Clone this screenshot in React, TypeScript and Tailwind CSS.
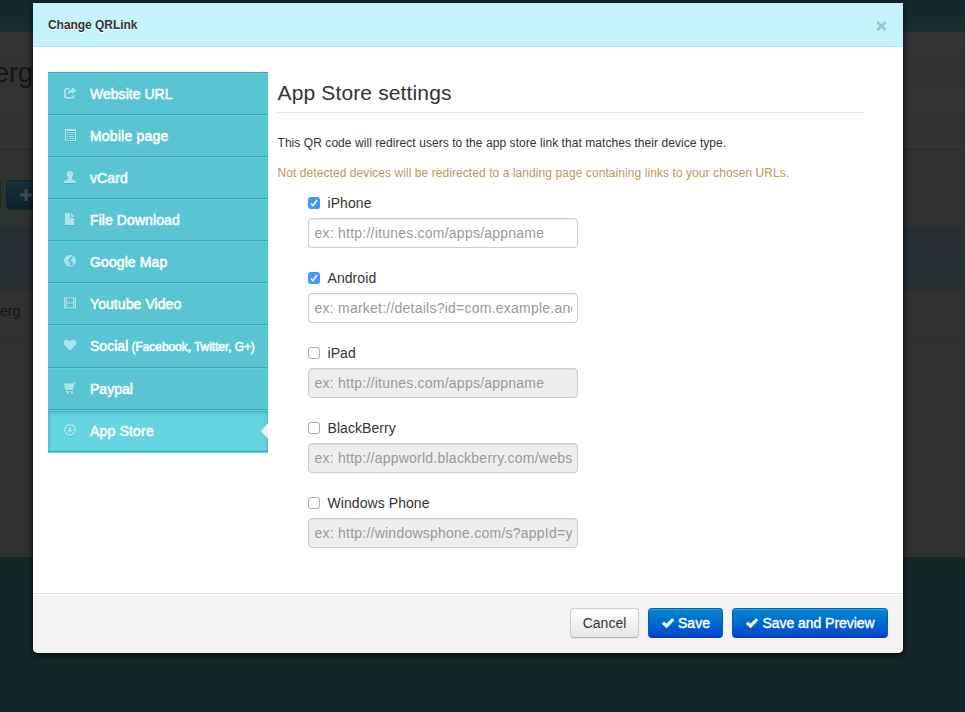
import type { ReactNode } from "react";

const glyphs: Record<string, ReactNode> = {
  share: (
    <>
      <path d="M6.500 2.900H4Q1.900 2.900 1.900 5V10Q1.900 12.100 4 12.100H8.700Q10.800 12.100 10.800 10V9" fill="none" stroke="currentColor" strokeWidth="1.900" />
      <path d="M9 1L13.500 4.800L9 8.600V6.400Q6.600 6.200 4.600 9Q4.600 3.600 9 3.200Z" />
    </>
  ),
  list: (
    <path shapeRendering="crispEdges" fillRule="evenodd" d="M2 1H13V13H2ZM3 3V12H12V3ZM4 4H5V5H4ZM6 4H11V5H6ZM4 6H5V7H4ZM6 6H11V7H6ZM4 8H5V9H4ZM6 8H11V9H6ZM4 10H5V11H4ZM6 10H11V11H6Z" />
  ),
  user: (
    <path d="M7 1C9.300 1 10.500 2.300 10.300 4.200C10.200 5.800 9.500 6.500 9 7.300V9.200L12 10.500Q13 11 13 13H1Q1 11 2 10.500L5 9.200V7.300C4.500 6.500 3.800 5.800 3.700 4.200C3.500 2.300 4.700 1 7 1Z" />
  ),
  file: <path d="M2 1H7V6H11V13H2ZM8 1L11 4V5H8Z" />,
  globe: (
    <>
      <circle cx="7" cy="7" r="5.400" fill="none" stroke="currentColor" strokeWidth="1.200" />
      <path d="M1.500 4.500L4 2L7 1.200L8.500 3L6.500 4L6.500 5.500L4.500 6.500L7 8.500L6 12.500L3.500 11L3 8L1.300 7.500ZM9 1.500L12.500 4.500V8L10.500 11L9.500 8L8 7L8.500 4.500L10 4Z" />
    </>
  ),
  film: (
    <path fillRule="evenodd" d="M1 1.500H13V12.500H1ZM4 2.500V6.500H10V2.500ZM4 7.500V11.500H10V7.500ZM2 2.500V3.500H3V2.500ZM2 4.500V5.500H3V4.500ZM2 6.500V7.500H3V6.500ZM2 8.500V9.500H3V8.500ZM2 10.500V11.500H3V10.500ZM11 2.500V3.500H12V2.500ZM11 4.500V5.500H12V4.500ZM11 6.500V7.500H12V6.500ZM11 8.500V9.500H12V8.500ZM11 10.500V11.500H12V10.500Z" />
  ),
  heart: <path d="M7 13L1.500 7.300C-0.500 4.500 1 1.800 3.800 1.800C5.500 1.800 6.500 2.700 7 3.700C7.500 2.700 8.500 1.800 10.200 1.800C13 1.800 14.500 4.500 12.500 7.300Z" />,
  cart: (
    <path d="M1 2.500H10.300L10.900 1H13V2.200H11.700L10 9H4V10.200H10V11.200H3V8.800L1.800 7.800ZM3.800 11.500H5.800V13H3.800ZM8 11.500H10V13H8Z" />
  ),
  download: (
    <>
      <circle cx="7" cy="7" r="5.200" fill="none" stroke="currentColor" strokeWidth="1.700" />
      <path d="M6 3.700H8V7H10.200L7 10.300L3.800 7H6Z" />
    </>
  ),
};

const menu = [
  { icon: "share", label: "Website URL", track: "tracking-[0.03px]" },
  { icon: "list", label: "Mobile page", track: "tracking-[0.19px]" },
  { icon: "user", label: "vCard", track: "tracking-[0.1px]" },
  { icon: "file", label: "File Download", track: "tracking-[0.08px]" },
  { icon: "globe", label: "Google Map", track: "tracking-[0.1px]" },
  { icon: "film", label: "Youtube Video", track: "tracking-[0.08px]" },
  { icon: "heart", label: "Social", note: "(Facebook, Twitter, G+)", track: "tracking-[0.03px]" },
  { icon: "cart", label: "Paypal", track: "tracking-[0.03px]" },
  { icon: "download", label: "App Store", active: true, track: "tracking-[0.18px]" },
];

const fields = [
  { name: "iPhone", hint: "ex: http://itunes.com/apps/appname", on: true },
  { name: "Android", hint: "ex: market://details?id=com.example.android", on: true },
  { name: "iPad", hint: "ex: http://itunes.com/apps/appname", on: false },
  { name: "BlackBerry", hint: "ex: http://appworld.blackberry.com/webstore", on: false },
  { name: "Windows Phone", hint: "ex: http://windowsphone.com/s?appId=your", on: false },
];

function Tick() {
  return (
    <svg viewBox="0 0 14 12" className="h-3 w-3.5 fill-white">
      <path d="M0.800 6.800L3 4.600L5.500 6.800L11.200 1L13.300 3.200L5.600 11.200Z" />
    </svg>
  );
}

function Backdrop() {
  return (
    <div className="flex h-full flex-col text-[#141414]">
      <div className="h-8 bg-linear-to-b from-[#14272a] to-[#1b3033]" />
      <div className="flex h-[81px] w-full border-b border-[#263a3c] bg-linear-to-b from-[#333432] via-[#323234] to-[#333432]">
        <div className="flex w-[33px] justify-end overflow-hidden pt-[22px] text-[27px] leading-[38px]">erg</div>
      </div>
      <div className="h-[37px] border-b border-[#1f2d30] bg-[#333232]" />
      <div className="flex h-[76px] bg-[#303231] pt-[30px]">
        <div className="h-[28px] w-px bg-[#123012]" />
        <div className="ml-[5px] flex h-[30px] w-[60px] items-center rounded border border-[#10252d] bg-linear-to-b from-[#173039] to-[#0d222b] pl-[13px]">
          <svg viewBox="0 0 12 12" className="size-3 fill-[#424b4e]"><path d="M4.500 0H7.500V4.500H12V7.500H7.500V12H4.500V7.500H0V4.500H4.500Z" /></svg>
        </div>
      </div>
      <div className="h-[66px] bg-[#272f32]" />
      <div className="h-[47px] border-b border-[#292e31] bg-[#323131] pt-[9px] text-sm leading-5">
        <span>erg</span>
      </div>
      <div className="h-[218px] bg-[#303231]" />
      <div className="flex-1 bg-[#14282b]" />
    </div>
  );
}

export default function App() {
  return (
    <div className="relative h-[712px] w-[965px] overflow-hidden font-['Liberation_Sans',Arial,sans-serif] text-sm text-[#333]">
      <Backdrop />
      <div className="absolute top-[3px] left-[33px] flex h-[650px] w-[870px] flex-col overflow-hidden rounded-b-[5px] bg-white shadow-[0_2px_6px_1px_rgba(0,0,0,0.65)]">
        <header className="flex h-11 shrink-0 items-center justify-between border-b border-[#aeeaf0] bg-[#c4f3f9] pt-px pr-4 pl-[15px]">
          <h3 className="text-xs font-bold tracking-[-0.05px] [text-shadow:0_1px_0_white]">Change QRLink</h3>
          <svg viewBox="0 0 11 10" className="mt-px h-[10px] w-[11px]"><path d="M1.300 1L9.700 9M9.700 1L1.300 9" stroke="#9ec3c8" strokeWidth="2.500" /></svg>
        </header>
        <div className="flex flex-1 pt-[25px] pl-[15px]">
          <nav className="w-[220px] shrink-0">
            {menu.map((m) => (
              <div
                key={m.label}
                className={`flex border-t border-[#39a5b4] pl-[15px] text-white ${
                  m.active
                    ? "h-[43px] border-b bg-[#65d5e1] shadow-[0_1px_0_#62dce8,inset_0_1px_0_#55d3e0,inset_0_2px_4px_rgba(0,70,90,0.35)]"
                    : m.note
                      ? "h-[43px] bg-[#59c5d3] shadow-[inset_0_1px_0_#55d3e0]"
                      : "h-[42px] bg-[#59c5d3] shadow-[inset_0_1px_0_#55d3e0]"
                }`}
              >
                <svg viewBox="0 0 14 14" className="mt-[13px] size-3.5 fill-current text-[#aee3eb] drop-shadow-[0_1px_0_rgba(0,80,100,0.15)]">
                  {glyphs[m.icon]}
                </svg>
                <span className={`mt-[11px] ml-[13px] text-sm leading-5 whitespace-nowrap [-webkit-text-stroke:0.5px_white] ${m.track}`}>
                  {m.label}
                  {m.note && <span className="text-[12px] tracking-[-0.07px]"> {m.note}</span>}
                </span>
                {m.active && (
                  <svg viewBox="0 0 7 16" className="mt-[13px] ml-auto h-4 w-[7px] fill-[#eee]"><path d="M7 0V16L0 8Z" /></svg>
                )}
              </div>
            ))}
          </nav>
          <main className="ml-[9px] w-[586px]">
            <h2 className="h-[41px] border-b border-[#e5e5e5] pl-[0.5px] text-[21px] leading-[42px] tracking-[0.14px] whitespace-nowrap">App Store settings</h2>
            <p className="mt-5 pl-[0.5px] text-xs leading-5 tracking-[0.06px] whitespace-nowrap">This QR code will redirect users to the app store link that matches their device type.</p>
            <p className="mt-[10px] pl-[0.5px] text-xs leading-5 tracking-[0.072px] whitespace-nowrap text-[#c09853]">Not detected devices will be redirected to a landing page containing links to your chosen URLs.</p>
            <div className="mt-[10px] ml-[31px] flex flex-col gap-5">
              {fields.map((f) => (
                <div key={f.name} className="flex h-[55px] flex-col">
                  <label className="flex h-[25px] gap-[7.5px] leading-5 tracking-[0.07px]">
                    <span className={`mt-1 flex size-3 items-center justify-center rounded-[3px] ${f.on ? "bg-[#3b99fc]" : "border border-[#a9a9a9] bg-white"}`}>
                      {f.on && (
                        <svg viewBox="0 0 12 12" className="size-3"><path d="M3 6.500L5 8.700L9 3" fill="none" stroke="white" strokeWidth="1.600" /></svg>
                      )}
                    </span>
                    {f.name}
                  </label>
                  <input
                    placeholder={f.hint}
                    disabled={!f.on}
                    className={`h-[30px] w-[270px] rounded border border-[#ccc] px-[5.5px] tracking-[0.235px] shadow-[inset_0_1px_1px_rgba(0,0,0,0.075)] placeholder:text-[#999] ${f.on ? "bg-white" : "bg-[#eee]"}`}
                  />
                </div>
              ))}
            </div>
          </main>
        </div>
        <footer className="flex h-[60px] shrink-0 justify-end border-t border-[#ddd] bg-[#f4f4f4] pt-[14px] pr-[15px] shadow-[inset_0_1px_0_white]">
          <button className="h-[30px] w-[69px] rounded border border-[#ccc] border-b-[#b3b3b3] bg-linear-to-b from-white to-[#e6e6e6] leading-7 shadow-[0_1px_2px_rgba(0,0,0,0.05)]">Cancel</button>
          <button className="ml-[9px] flex h-[30px] w-[75px] items-center justify-center gap-[3px] rounded border border-[#0160bd] border-b-[#003ea6] bg-linear-to-b from-[#0088cc] to-[#0044cc] text-white shadow-[inset_0_1px_0_rgba(255,255,255,0.2)] [-webkit-text-stroke:0.4px_white]">
            <Tick />
            Save
          </button>
          <button className="ml-[9px] flex h-[30px] w-[156px] items-center justify-center gap-[3px] rounded border border-[#0160bd] border-b-[#003ea6] bg-linear-to-b from-[#0088cc] to-[#0044cc] tracking-[-0.04px] whitespace-nowrap text-white shadow-[inset_0_1px_0_rgba(255,255,255,0.2)] [-webkit-text-stroke:0.4px_white]">
            <Tick />
            Save and Preview
          </button>
        </footer>
      </div>
    </div>
  );
}
